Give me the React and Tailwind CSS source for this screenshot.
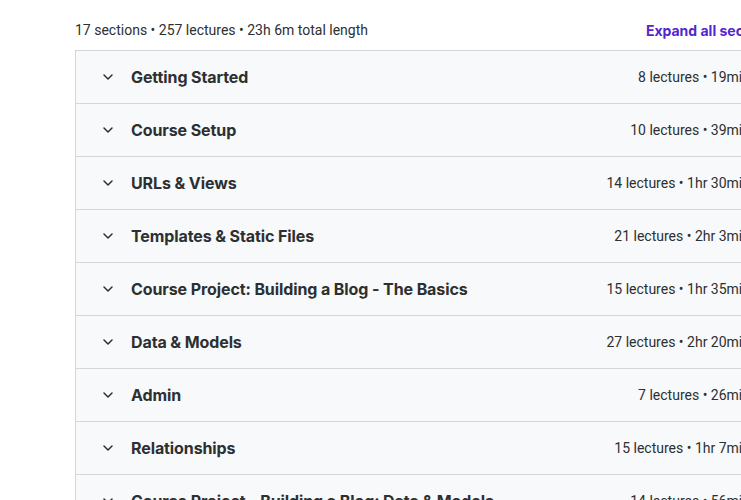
import React from "react";

const sections = [
  ["Getting Started", "8 lectures • 19min"],
  ["Course Setup", "10 lectures • 39min"],
  ["URLs & Views", "14 lectures • 1hr 30min"],
  ["Templates & Static Files", "21 lectures • 2hr 3min"],
  ["Course Project: Building a Blog - The Basics", "15 lectures • 1hr 35min"],
  ["Data & Models", "27 lectures • 2hr 20min"],
  ["Admin", "7 lectures • 26min"],
  ["Relationships", "15 lectures • 1hr 7min"],
  ["Course Project - Building a Blog: Data & Models", "14 lectures • 56min"],
  ["Forms", "12 lectures • 1hr 10min"],
];

function Chevron() {
  return (
    <svg width="16" height="16" viewBox="0 0 16 16" fill="none" className="shrink-0">
      <path d="M4 6 L8 10 L12 6" stroke="#2d2f31" strokeWidth="1.5" strokeLinecap="round" strokeLinejoin="round" />
    </svg>
  );
}

export default function App() {
  return (
    <div className="w-[741px] h-[500px] overflow-hidden bg-white text-[#2d2f31]">
      <div className="pl-[75px] w-[778px]">
        <div className="h-[50px] flex items-center justify-between pt-[10px]" style={{ fontFamily: "Roboto, 'Noto Sans', sans-serif" }}>
          <span className="text-[14px] text-[#2d2f31]">17 sections • 257 lectures • 23h 6m total length</span>
          <span className="text-[14px] font-bold text-[#5624d0]" style={{ fontFamily: "Inter, sans-serif" }}>Expand all sections</span>
        </div>
        <div className="border border-[#d1d7dc] border-b-0">
          {sections.map(([t, m]) => (
            <div key={t} className="h-[53px] bg-[#f7f9fa] border-b border-[#d1d7dc] flex items-center pl-6 pr-[27px]">
              <Chevron />
              <span className="ml-[15px] text-[16px] font-bold flex-1 tracking-[-0.1px]" style={{ fontFamily: "Inter, sans-serif" }}>{t}</span>
              <span className="text-[14px] text-[#2d2f31]" style={{ fontFamily: "Roboto, 'Noto Sans', sans-serif" }}>{m}</span>
            </div>
          ))}
        </div>
      </div>
    </div>
  );
}
